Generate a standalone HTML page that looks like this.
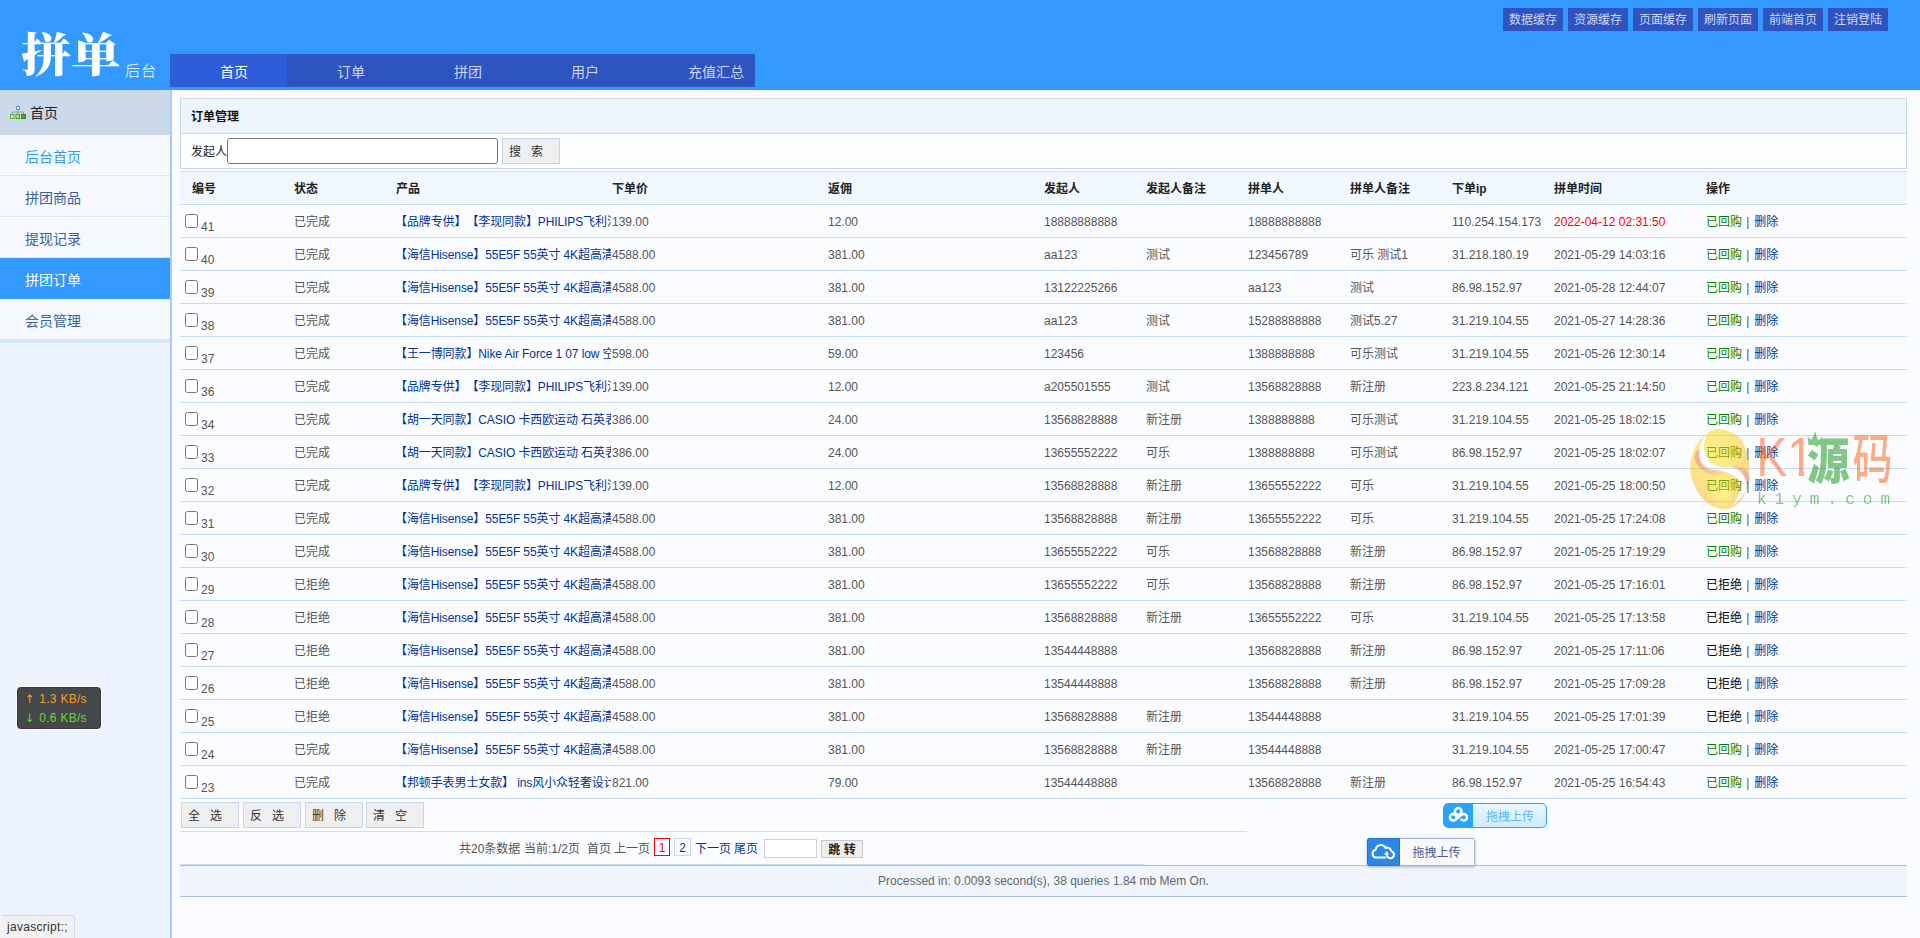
<!DOCTYPE html>
<html lang="zh-CN">
<head>
<meta charset="utf-8">
<title>拼单后台</title>
<style>
*{box-sizing:border-box;}
html,body{margin:0;padding:0;}
body{text-spacing-trim:space-all;width:1920px;height:938px;overflow:hidden;background:#fbfcff;font-family:"Liberation Sans","Noto Sans CJK SC",sans-serif;font-size:12px;color:#555;position:relative;}
a{color:#003399;text-decoration:none;}
/* header */
#hd{position:absolute;left:0;top:0;width:1920px;height:90px;background:#3399ff;}
#logo{position:absolute;left:21px;top:23px;color:#fff;font-family:"Liberation Serif","Noto Serif CJK SC",serif;font-weight:900;font-size:46px;line-height:66px;letter-spacing:0;white-space:nowrap;transform:scaleX(1.087);transform-origin:0 0;}
#logo2{position:absolute;left:125px;top:59px;color:#fff;font-family:"Liberation Sans","Noto Sans CJK SC",sans-serif;font-weight:300;font-size:15px;letter-spacing:1px;line-height:24px;white-space:nowrap;}
#topbtn{position:absolute;left:1503px;top:8px;white-space:nowrap;font-size:0;}
#topbtn a{display:inline-block;width:60px;height:23px;line-height:24px;margin-right:5px;background:#2e54bf;color:#d0d9f6;font-size:12px;text-align:center;}
#nav{position:absolute;left:170px;top:54px;height:33px;width:585px;background:#2e54bf;font-size:0;white-space:nowrap;}
#nav a{display:inline-block;width:117px;height:33px;line-height:37px;padding-left:50px;color:#cbd5f2;font-size:14px;}
#nav a.on{background:#2f5cd9;color:#fff;}
/* sidebar */
#side{position:absolute;left:0;top:90px;width:172px;height:848px;background:#edf3fe;border-right:2px solid #a9cdf4;}
#side h3{margin:0;height:45px;background:#c9d9ea;font-weight:normal;font-size:14px;color:#222;line-height:46px;padding-left:30px;position:relative;}
#side h3 svg{position:absolute;left:10px;top:15px;}
#side ul{list-style:none;margin:0;padding:0;border-bottom:4px solid #d5e8f7;background:#f5f9fe;}
#side li{height:41px;border-bottom:1px solid #d8e8fa;line-height:45px;padding-left:25px;font-size:14px;color:#3a5fa0;}
#side li.first{color:#3399ff;}
#side li.on{background:#3399ff;color:#fff;border-bottom-color:#3399ff;}
#side li.last{height:40px;border-bottom:0;}
/* panel */
#panel{position:absolute;left:180px;top:98px;width:1727px;height:71px;border:1px solid #c5d5ea;background:#fdfeff;}
#panel .tt{height:35px;background:#edf4fe;border-bottom:1px solid #c5d5ea;line-height:37px;padding-left:10px;font-weight:bold;color:#111;}
#panel .sr{height:34px;line-height:34px;padding-left:10px;color:#222;white-space:nowrap;font-size:0;}
#panel .sr span{font-size:12px;vertical-align:middle;position:relative;top:1px;}
.ipt{display:inline-block;vertical-align:middle;width:271px;height:26px;border:1px solid #767676;border-radius:3px;background:#fff;}
.btn{display:inline-block;vertical-align:middle;height:26px;width:58px;border:1px solid #c5d5ea;background:#efefef;color:#333;font-size:12px;line-height:26px;padding-left:6px;letter-spacing:10px;white-space:nowrap;overflow:hidden;}

/* table */
#tb{position:absolute;left:180px;top:171px;width:1727px;border-collapse:collapse;table-layout:fixed;border-top:1px solid #c9def5;}
#tb th{height:33px;padding:2px 0 0 12px;text-align:left;background:#f1f7fe;color:#222;font-weight:bold;border-bottom:1px solid #c4dcf5;line-height:30px;}
#tb td{height:33px;padding:2px 0 0 12px;text-align:left;border-bottom:1px solid #c4dcf5;line-height:30px;white-space:nowrap;color:#555;}
#tb td.c0{padding:0 0 0 5px;position:relative;}
#tb td.c0 input{position:absolute;left:5px;top:9.4px;width:13px;height:13.4px;margin:0;appearance:none;-webkit-appearance:none;border:1px solid #767676;border-radius:2.5px;background:#fff;}
#tb td.c0 .num{position:absolute;left:21px;top:6px;line-height:32px;}
#tb td.pc{padding:2px 0 0 12px;}
.prod{width:215px;overflow:hidden;white-space:nowrap;letter-spacing:-0.1px;text-indent:-1px;}
.sp{letter-spacing:0.8px;}
.red{color:#ff0000;}
.ok{color:#008000;}
.no{color:#000;}

/* bottom */
#brow{position:absolute;left:180px;top:799px;width:1067px;height:33px;border-bottom:1px solid #c9def5;font-size:0;white-space:nowrap;padding:3px 0 0 1px;}
#brow .btn{margin-right:4px;}
#brow .btn.m3{margin-right:3px;}
#prow{position:absolute;left:180px;top:832px;width:965px;height:33px;border-bottom:1px solid #c9def5;white-space:nowrap;}
#prow > *{position:absolute;top:1px;line-height:33px;height:33px;color:#555;}
#prow a{color:#003399;}
#prow .pg{top:6px;height:18px;width:17px;line-height:18px;text-align:center;border:1px solid #c5d9f5;color:#003399;}
#prow .pg.cur{border-color:#ff0000;color:#ff0000;width:16px;}
#prow .gi{top:7px;width:53px;height:19px;border:1px solid #d0d0d0;background:#fff;}
#prow .gb{top:8px;width:42px;height:18px;line-height:18px;border:1px solid #c8c8c8;background:#efefef;color:#222;text-align:center;}
#foot{position:absolute;left:180px;top:865px;width:1727px;height:32px;border-top:1px solid #a9bde6;border-bottom:1px solid #a9bde6;background:#f0f4fc;text-align:center;line-height:31px;color:#666;}
/* upload widgets */
#up1{position:absolute;left:1443px;top:803px;width:104px;height:25px;border:1px solid #2ea1ff;border-radius:5px;overflow:hidden;background:linear-gradient(#eaf7ff,#cdebfd);}
#up1 i{position:absolute;left:0;top:0;width:29px;height:23px;background:#2ba3fc;}
#up1 svg{position:absolute;left:3.2px;top:0px;}
#up1 span{position:absolute;left:42px;top:2px;line-height:23px;color:#5cb5f5;font-size:12px;white-space:nowrap;}
#up2{position:absolute;left:1367px;top:838px;width:108px;height:28px;border-radius:2px;background:#f8f8f8;box-shadow:0 1px 3px rgba(60,80,130,.42);overflow:hidden;}
#up2 i{position:absolute;left:0;top:0;width:33px;height:28px;background:#2b88e8;border:1px solid #2276d2;border-radius:2px 0 0 2px;}
#up2 em{position:absolute;left:33px;top:0;width:75px;height:28px;border:1px solid #9fb3d9;border-left:0;border-radius:0 2px 2px 0;}
#up2 svg{position:absolute;left:3px;top:3px;}
#up2 span{position:absolute;left:45.5px;top:2px;line-height:26px;color:#3d5f96;font-size:12px;white-space:nowrap;}
/* net widget */
#net{position:absolute;left:17px;top:687px;width:84px;height:42px;background:#45474b;border:1px solid #38393c;border-radius:3.5px;box-shadow:0 0 0 1px rgba(255,255,255,.7);font-size:12px;line-height:19px;padding:2px 0 0 8px;white-space:nowrap;letter-spacing:0.28px;}
#net div{height:19px;}
#net .u{color:#f5a020;}
#net .d{color:#66dd22;}
#net b{display:inline-block;width:13.3px;font-weight:normal;font-family:"DejaVu Sans",sans-serif;font-size:11.5px;letter-spacing:0;position:relative;left:-1px;}
#stat{position:absolute;left:2px;top:915px;width:73px;letter-spacing:0.3px;height:23px;background:#f1f1f1;border-top:1px solid #cfd8e2;border-right:1px solid #cfd8e2;border-top-right-radius:4px;color:#333;font-size:12px;line-height:22px;padding-left:5px;}
#wm{position:absolute;left:1680px;top:420px;}
</style>
</head>
<body>
<div id="hd">
  <div id="logo">拼单</div><div id="logo2">后台</div>
  <div id="topbtn"><a>数据缓存</a><a>资源缓存</a><a>页面缓存</a><a>刷新页面</a><a>前端首页</a><a>注销登陆</a></div>
  <div id="nav"><a class="on">首页</a><a>订单</a><a>拼团</a><a>用户</a><a>充值汇总</a></div>
</div>
<div id="side">
  <h3><svg width="17" height="16" viewBox="0 0 17 16"><rect x="6.5" y="1.5" width="3" height="3" fill="#e3eefc" stroke="#5b90da"/><path d="M8 5.5v1.5M2.5 9V7h11v2M8 7v2" fill="none" stroke="#9b9b9b"/><rect x="0.5" y="9.5" width="3.5" height="4" fill="#cdeab8" stroke="#56ab35"/><rect x="6" y="9.5" width="3.5" height="4" fill="#b7dd9c" stroke="#4aa02c"/><rect x="11.5" y="9.5" width="4" height="4" fill="#4fa52f" stroke="#2f8a1b"/></svg>首页</h3>
  <ul><li class="first">后台首页</li><li>拼团商品</li><li>提现记录</li><li class="on">拼团订单</li><li class="last">会员管理</li></ul>
</div>
<div id="panel">
  <div class="tt">订单管理</div>
  <div class="sr"><span>发起人</span><i class="ipt"></i><span style="display:inline-block;width:4px"></span><b class="btn" style="font-weight:normal">搜索</b></div>
</div>
<table id="tb"><colgroup><col style="width:102px"><col style="width:102px"><col style="width:216px"><col style="width:216px"><col style="width:216px"><col style="width:102px"><col style="width:102px"><col style="width:102px"><col style="width:102px"><col style="width:102px"><col style="width:152px"><col></colgroup>
<tr><th>编号</th><th>状态</th><th>产品</th><th>下单价</th><th>返佣</th><th>发起人</th><th>发起人备注</th><th>拼单人</th><th>拼单人备注</th><th>下单ip</th><th>拼单时间</th><th>操作</th></tr>
<tr><td class="c0"><input type="checkbox"><span class="num">41</span></td><td>已完成</td><td class="pc"><div class="prod"><a>【品牌专供】【李现同款】PHILIPS飞利浦电动剃须刀</a></div></td><td>139.00</td><td>12.00</td><td>18888888888</td><td></td><td>18888888888</td><td></td><td>110.254.154.173</td><td><span class="red">2022-04-12 02:31:50</span></td><td><span class="ok">已回购</span><span class="sp"> | </span><a>删除</a></td></tr>
<tr><td class="c0"><input type="checkbox"><span class="num">40</span></td><td>已完成</td><td class="pc"><div class="prod"><a>【海信Hisense】55E5F 55英寸 4K超高清液晶电视</a></div></td><td>4588.00</td><td>381.00</td><td>aa123</td><td>测试</td><td>123456789</td><td>可乐 测试1</td><td>31.218.180.19</td><td>2021-05-29 14:03:16</td><td><span class="ok">已回购</span><span class="sp"> | </span><a>删除</a></td></tr>
<tr><td class="c0"><input type="checkbox"><span class="num">39</span></td><td>已完成</td><td class="pc"><div class="prod"><a>【海信Hisense】55E5F 55英寸 4K超高清液晶电视</a></div></td><td>4588.00</td><td>381.00</td><td>13122225266</td><td></td><td>aa123</td><td>测试</td><td>86.98.152.97</td><td>2021-05-28 12:44:07</td><td><span class="ok">已回购</span><span class="sp"> | </span><a>删除</a></td></tr>
<tr><td class="c0"><input type="checkbox"><span class="num">38</span></td><td>已完成</td><td class="pc"><div class="prod"><a>【海信Hisense】55E5F 55英寸 4K超高清液晶电视</a></div></td><td>4588.00</td><td>381.00</td><td>aa123</td><td>测试</td><td>15288888888</td><td>测试5.27</td><td>31.219.104.55</td><td>2021-05-27 14:28:36</td><td><span class="ok">已回购</span><span class="sp"> | </span><a>删除</a></td></tr>
<tr><td class="c0"><input type="checkbox"><span class="num">37</span></td><td>已完成</td><td class="pc"><div class="prod"><a>【王一博同款】Nike Air Force 1 07 low 空军一号</a></div></td><td>598.00</td><td>59.00</td><td>123456</td><td></td><td>1388888888</td><td>可乐测试</td><td>31.219.104.55</td><td>2021-05-26 12:30:14</td><td><span class="ok">已回购</span><span class="sp"> | </span><a>删除</a></td></tr>
<tr><td class="c0"><input type="checkbox"><span class="num">36</span></td><td>已完成</td><td class="pc"><div class="prod"><a>【品牌专供】【李现同款】PHILIPS飞利浦电动剃须刀</a></div></td><td>139.00</td><td>12.00</td><td>a205501555</td><td>测试</td><td>13568828888</td><td>新注册</td><td>223.8.234.121</td><td>2021-05-25 21:14:50</td><td><span class="ok">已回购</span><span class="sp"> | </span><a>删除</a></td></tr>
<tr><td class="c0"><input type="checkbox"><span class="num">34</span></td><td>已完成</td><td class="pc"><div class="prod"><a>【胡一天同款】CASIO 卡西欧运动 石英表男士手表</a></div></td><td>386.00</td><td>24.00</td><td>13568828888</td><td>新注册</td><td>1388888888</td><td>可乐测试</td><td>31.219.104.55</td><td>2021-05-25 18:02:15</td><td><span class="ok">已回购</span><span class="sp"> | </span><a>删除</a></td></tr>
<tr><td class="c0"><input type="checkbox"><span class="num">33</span></td><td>已完成</td><td class="pc"><div class="prod"><a>【胡一天同款】CASIO 卡西欧运动 石英表男士手表</a></div></td><td>386.00</td><td>24.00</td><td>13655552222</td><td>可乐</td><td>1388888888</td><td>可乐测试</td><td>86.98.152.97</td><td>2021-05-25 18:02:07</td><td><span class="ok">已回购</span><span class="sp"> | </span><a>删除</a></td></tr>
<tr><td class="c0"><input type="checkbox"><span class="num">32</span></td><td>已完成</td><td class="pc"><div class="prod"><a>【品牌专供】【李现同款】PHILIPS飞利浦电动剃须刀</a></div></td><td>139.00</td><td>12.00</td><td>13568828888</td><td>新注册</td><td>13655552222</td><td>可乐</td><td>31.219.104.55</td><td>2021-05-25 18:00:50</td><td><span class="ok">已回购</span><span class="sp"> | </span><a>删除</a></td></tr>
<tr><td class="c0"><input type="checkbox"><span class="num">31</span></td><td>已完成</td><td class="pc"><div class="prod"><a>【海信Hisense】55E5F 55英寸 4K超高清液晶电视</a></div></td><td>4588.00</td><td>381.00</td><td>13568828888</td><td>新注册</td><td>13655552222</td><td>可乐</td><td>31.219.104.55</td><td>2021-05-25 17:24:08</td><td><span class="ok">已回购</span><span class="sp"> | </span><a>删除</a></td></tr>
<tr><td class="c0"><input type="checkbox"><span class="num">30</span></td><td>已完成</td><td class="pc"><div class="prod"><a>【海信Hisense】55E5F 55英寸 4K超高清液晶电视</a></div></td><td>4588.00</td><td>381.00</td><td>13655552222</td><td>可乐</td><td>13568828888</td><td>新注册</td><td>86.98.152.97</td><td>2021-05-25 17:19:29</td><td><span class="ok">已回购</span><span class="sp"> | </span><a>删除</a></td></tr>
<tr><td class="c0"><input type="checkbox"><span class="num">29</span></td><td>已拒绝</td><td class="pc"><div class="prod"><a>【海信Hisense】55E5F 55英寸 4K超高清液晶电视</a></div></td><td>4588.00</td><td>381.00</td><td>13655552222</td><td>可乐</td><td>13568828888</td><td>新注册</td><td>86.98.152.97</td><td>2021-05-25 17:16:01</td><td><span class="no">已拒绝</span><span class="sp"> | </span><a>删除</a></td></tr>
<tr><td class="c0"><input type="checkbox"><span class="num">28</span></td><td>已拒绝</td><td class="pc"><div class="prod"><a>【海信Hisense】55E5F 55英寸 4K超高清液晶电视</a></div></td><td>4588.00</td><td>381.00</td><td>13568828888</td><td>新注册</td><td>13655552222</td><td>可乐</td><td>31.219.104.55</td><td>2021-05-25 17:13:58</td><td><span class="no">已拒绝</span><span class="sp"> | </span><a>删除</a></td></tr>
<tr><td class="c0"><input type="checkbox"><span class="num">27</span></td><td>已拒绝</td><td class="pc"><div class="prod"><a>【海信Hisense】55E5F 55英寸 4K超高清液晶电视</a></div></td><td>4588.00</td><td>381.00</td><td>13544448888</td><td></td><td>13568828888</td><td>新注册</td><td>86.98.152.97</td><td>2021-05-25 17:11:06</td><td><span class="no">已拒绝</span><span class="sp"> | </span><a>删除</a></td></tr>
<tr><td class="c0"><input type="checkbox"><span class="num">26</span></td><td>已拒绝</td><td class="pc"><div class="prod"><a>【海信Hisense】55E5F 55英寸 4K超高清液晶电视</a></div></td><td>4588.00</td><td>381.00</td><td>13544448888</td><td></td><td>13568828888</td><td>新注册</td><td>86.98.152.97</td><td>2021-05-25 17:09:28</td><td><span class="no">已拒绝</span><span class="sp"> | </span><a>删除</a></td></tr>
<tr><td class="c0"><input type="checkbox"><span class="num">25</span></td><td>已拒绝</td><td class="pc"><div class="prod"><a>【海信Hisense】55E5F 55英寸 4K超高清液晶电视</a></div></td><td>4588.00</td><td>381.00</td><td>13568828888</td><td>新注册</td><td>13544448888</td><td></td><td>31.219.104.55</td><td>2021-05-25 17:01:39</td><td><span class="no">已拒绝</span><span class="sp"> | </span><a>删除</a></td></tr>
<tr><td class="c0"><input type="checkbox"><span class="num">24</span></td><td>已完成</td><td class="pc"><div class="prod"><a>【海信Hisense】55E5F 55英寸 4K超高清液晶电视</a></div></td><td>4588.00</td><td>381.00</td><td>13568828888</td><td>新注册</td><td>13544448888</td><td></td><td>31.219.104.55</td><td>2021-05-25 17:00:47</td><td><span class="ok">已回购</span><span class="sp"> | </span><a>删除</a></td></tr>
<tr><td class="c0"><input type="checkbox"><span class="num">23</span></td><td>已完成</td><td class="pc"><div class="prod"><a>【邦顿手表男士女款】 ins风小众轻奢设计感手表</a></div></td><td>821.00</td><td>79.00</td><td>13544448888</td><td></td><td>13568828888</td><td>新注册</td><td>86.98.152.97</td><td>2021-05-25 16:54:43</td><td><span class="ok">已回购</span><span class="sp"> | </span><a>删除</a></td></tr>
</table>
<div id="brow"><b class="btn" style="font-weight:normal">全选</b><b class="btn" style="font-weight:normal">反选</b><b class="btn m3" style="font-weight:normal">删除</b><b class="btn" style="font-weight:normal">清空</b></div>
<div id="prow"><span style="left:279px">共20条数据</span><span style="left:344px">当前:1/2页</span><span style="left:407px">首页</span><span style="left:434px">上一页</span><span class="pg cur" style="left:474px">1</span><a class="pg" style="left:494px">2</a><a style="left:515px">下一页</a><a style="left:554px">尾页</a><i class="gi" style="left:584px"></i><b class="gb" style="left:641px">跳 转</b></div>
<div id="foot">Processed in: 0.0093 second(s), 38 queries 1.84 mb Mem On.</div>
<div id="up1"><i></i><svg width="22" height="22" viewBox="0 0 22 22"><g fill="none" stroke="#fff" stroke-width="2.5" stroke-linecap="round"><circle cx="11.2" cy="7.4" r="3.3"/><circle cx="6.2" cy="13.2" r="3.3"/><path d="M8.6 15.5L14.3 10.9A3.3 3.3 0 1 1 14.3 15.5"/></g></svg><span>拖拽上传</span></div>
<div id="up2"><i></i><em></em><svg width="28" height="22" viewBox="0 0 28 22"><path d="M15 16.6H6.6a4 4 0 0 1-.9-7.9a5.2 5.2 0 0 1 9.9-1.6a3.6 3.6 0 0 1 5.2 1.9" fill="none" stroke="#fff" stroke-width="2" stroke-linecap="round" stroke-linejoin="round"/><path d="M21.3 10.1A3.6 3.6 0 1 1 17 14.8" fill="none" stroke="#fff" stroke-width="2" stroke-linecap="round"/><path d="M13.9 13.4l3-3.5 2.1 4z" fill="#fff"/></svg><span>拖拽上传</span></div>
<div id="net"><div class="u"><b>↑</b>1.3 KB/s</div><div class="d"><b>↓</b>0.6 KB/s</div></div>
<div id="stat">javascript:;</div>
<!--WMS--><svg id="wm" width="220" height="100" viewBox="0 0 220 100" style="overflow:visible">
<defs>
<radialGradient id="eg" cx="0.40" cy="0.28" r="0.8"><stop offset="0" stop-color="#ffe600"/><stop offset="0.4" stop-color="#ffd000"/><stop offset="1" stop-color="#f0a010"/></radialGradient>
<radialGradient id="eg2" cx="0.55" cy="0.80" r="0.3"><stop offset="0" stop-color="#fff000" stop-opacity="1"/><stop offset="1" stop-color="#ffe000" stop-opacity="0"/></radialGradient>
<linearGradient id="pk" x1="0" y1="0" x2="1" y2="0"><stop offset="0" stop-color="#e8402c" stop-opacity="0.9"/><stop offset="1" stop-color="#ee6a40" stop-opacity="0.2"/></linearGradient>
<linearGradient id="pk2" x1="1" y1="0" x2="0" y2="0"><stop offset="0" stop-color="#e8402c" stop-opacity="0.9"/><stop offset="1" stop-color="#ee6a40" stop-opacity="0.15"/></linearGradient>
<clipPath id="c1" clipPathUnits="userSpaceOnUse"><path d="M0-45H20V2H13.5V-5H0Z"/></clipPath>
<mask id="sm"><rect x="0" y="0" width="220" height="100" fill="#fff"/><path d="M28.0 12.0C27.5 11.9 23.4 17.7 22.0 21.0C20.6 24.3 19.4 28.4 19.3 32.0C19.2 35.6 19.7 39.8 21.5 42.6C23.3 45.4 26.5 47.6 30.0 49.0C33.5 50.4 38.7 50.1 42.6 51.2C46.5 52.3 50.3 53.3 53.3 55.4C56.3 57.5 59.8 60.8 60.6 64.0C61.4 67.2 59.5 71.0 58.3 74.6C57.1 78.2 52.4 85.5 53.3 85.5C54.2 85.5 61.4 78.2 63.6 74.6C65.8 71.0 66.9 67.5 66.6 64.0C66.3 60.5 64.2 56.2 62.0 53.5C59.8 50.8 56.5 48.7 53.3 47.6C50.1 46.5 46.1 47.8 42.6 47.1C39.1 46.4 35.0 46.0 32.0 43.5C29.0 41.0 25.8 35.7 24.6 32.0C23.4 28.3 24.2 24.6 24.8 21.3C25.4 18.0 28.5 12.1 28.0 12.0Z" fill="#000"/></mask>
</defs>
<g opacity="0.47">
<g mask="url(#sm)">
<path d="M40.5 9.1C44.8 10.0 53.3 12.5 57.6 16.0C61.9 19.5 64.2 25.5 66.1 29.9C68.0 34.3 68.6 39.0 69.1 42.6C69.6 46.2 69.4 48.0 69.3 51.2C69.2 54.4 68.9 58.1 68.2 61.8C67.5 65.5 66.4 70.2 65.0 73.6C63.6 77.0 61.7 79.9 59.7 82.1C57.8 84.3 56.1 85.8 53.3 86.9C50.4 88.1 46.3 89.3 42.6 89.0C38.9 88.7 34.4 87.3 30.9 85.3C27.3 83.3 24.1 80.3 21.3 76.8C18.5 73.2 15.7 68.3 13.9 64.0C12.1 59.7 10.9 55.3 10.4 51.2C9.9 47.1 10.3 43.7 11.2 39.4C12.1 35.1 13.8 29.7 16.0 25.6C18.2 21.5 21.8 17.4 24.5 14.9C27.2 12.4 29.3 11.7 32.0 10.7C34.7 9.7 36.2 8.2 40.5 9.1Z" fill="url(#eg)"/>
<path d="M40.5 9.1C44.8 10.0 53.3 12.5 57.6 16.0C61.9 19.5 64.2 25.5 66.1 29.9C68.0 34.3 68.6 39.0 69.1 42.6C69.6 46.2 69.4 48.0 69.3 51.2C69.2 54.4 68.9 58.1 68.2 61.8C67.5 65.5 66.4 70.2 65.0 73.6C63.6 77.0 61.7 79.9 59.7 82.1C57.8 84.3 56.1 85.8 53.3 86.9C50.4 88.1 46.3 89.3 42.6 89.0C38.9 88.7 34.4 87.3 30.9 85.3C27.3 83.3 24.1 80.3 21.3 76.8C18.5 73.2 15.7 68.3 13.9 64.0C12.1 59.7 10.9 55.3 10.4 51.2C9.9 47.1 10.3 43.7 11.2 39.4C12.1 35.1 13.8 29.7 16.0 25.6C18.2 21.5 21.8 17.4 24.5 14.9C27.2 12.4 29.3 11.7 32.0 10.7C34.7 9.7 36.2 8.2 40.5 9.1Z" fill="url(#eg2)"/>
<path d="M17.5 30.0C18.3 29.0 18.6 29.9 19.3 32.0C20.0 34.1 19.7 39.8 21.5 42.6C23.3 45.4 26.5 47.6 30.0 49.0C33.5 50.4 39.9 50.6 42.6 51.2C45.3 51.8 46.8 52.3 46.0 52.8C45.2 53.3 41.0 54.3 38.0 54.4C35.0 54.5 31.2 54.4 28.0 53.2C24.8 52.0 21.2 49.5 19.0 47.0C16.8 44.5 14.8 40.8 14.5 38.0C14.2 35.2 16.7 31.0 17.5 30.0Z" fill="url(#pk)"/>
<path d="M53.3 47.6C55.3 49.0 59.8 50.8 62.0 53.5C64.2 56.2 65.9 61.2 66.6 64.0C67.3 66.8 65.5 70.7 66.0 70.0C66.5 69.3 69.2 63.1 69.4 60.0C69.6 56.9 68.7 53.8 67.0 51.5C65.3 49.2 61.8 47.4 59.0 46.3C56.2 45.2 51.0 44.8 50.0 45.0C49.0 45.2 51.3 46.2 53.3 47.6Z" fill="url(#pk2)"/>
</g>
<g font-family="'Liberation Sans','Noto Sans CJK SC',sans-serif">
<text transform="translate(76.6,55.9) scale(0.82,1)" font-size="56" fill="#ff5200">K</text>
<text transform="translate(107,55.9) scale(0.857,1)" font-size="56" fill="#ff5200" clip-path="url(#c1)">1</text>
<text transform="translate(127.1,58.5) scale(0.86,1)" font-size="49.5" font-weight="900" font-family="'Noto Sans CJK SC',sans-serif" fill="#008a00">源</text>
<text transform="translate(172.4,59.1) scale(0.742,1)" font-size="54" font-weight="500" font-family="'Noto Sans CJK SC',sans-serif" fill="#ff5200">码</text>
<path d="M128.5 25l-1-8.5 4.4 4.2 3.1-9.7 3.1 9.7 4.4-4.2-1 8.5z" fill="#008a00"/>
<text x="76.9" y="83.7" font-size="16" letter-spacing="8.05" font-family="'Liberation Mono',monospace" fill="#008a00">k1ym.com</text>
</g>
</g>
</svg><!--WME-->
</body>
</html>
